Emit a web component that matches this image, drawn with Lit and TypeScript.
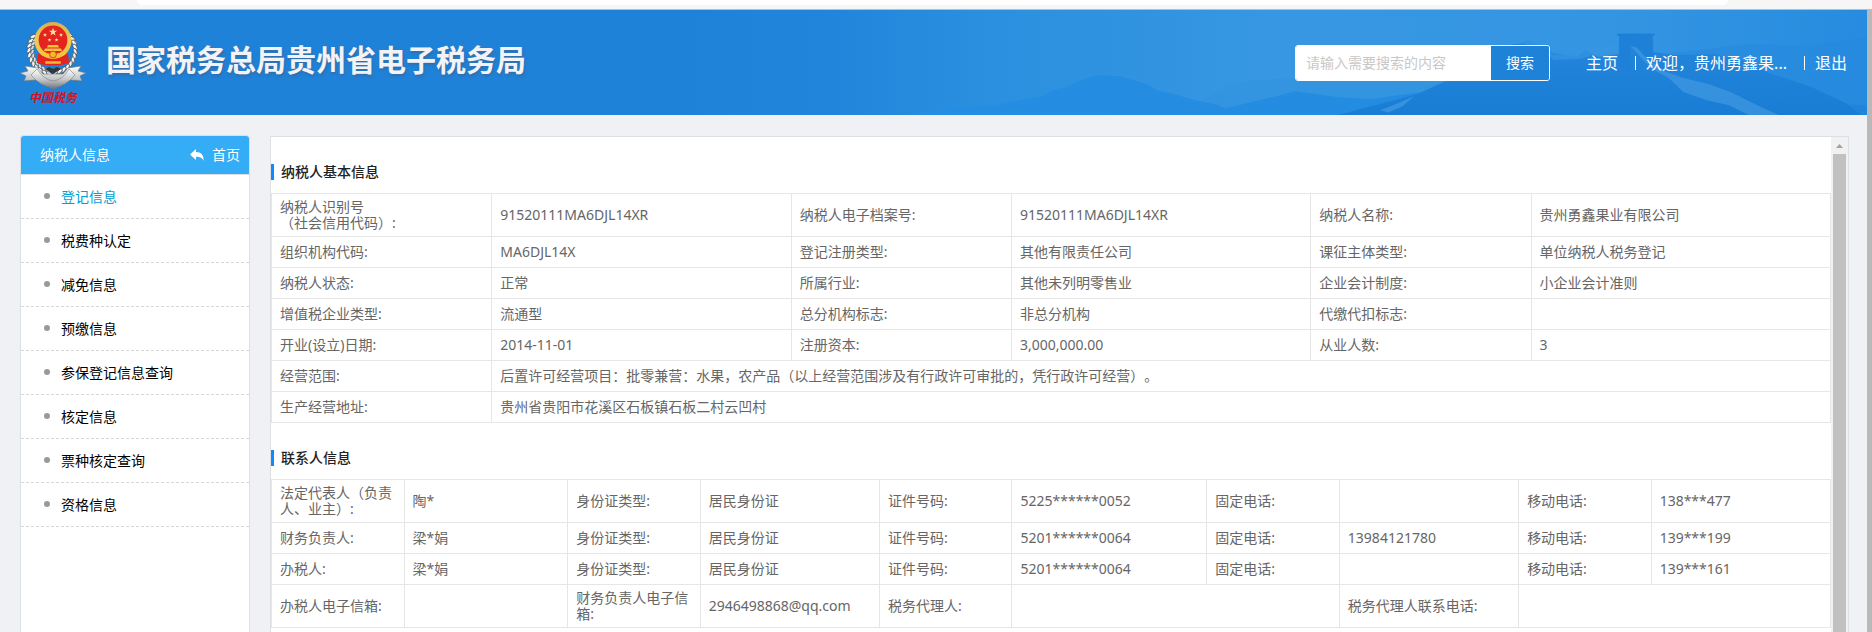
import { LitElement, html, css, svg } from "lit";
import { customElement, state } from "lit/decorators.js";
import { classMap } from "lit/directives/class-map.js";

type Cell = { text: string; span?: number };
const c = (text: string, span?: number): Cell => ({ text, span });

const MENU = [
  "登记信息",
  "税费种认定",
  "减免信息",
  "预缴信息",
  "参保登记信息查询",
  "核定信息",
  "票种核定查询",
  "资格信息",
];

const BASIC: Cell[][] = [
  [c("纳税人识别号\n（社会信用代码）:"), c("91520111MA6DJL14XR"), c("纳税人电子档案号:"), c("91520111MA6DJL14XR"), c("纳税人名称:"), c("贵州勇鑫果业有限公司")],
  [c("组织机构代码:"), c("MA6DJL14X"), c("登记注册类型:"), c("其他有限责任公司"), c("课征主体类型:"), c("单位纳税人税务登记")],
  [c("纳税人状态:"), c("正常"), c("所属行业:"), c("其他未列明零售业"), c("企业会计制度:"), c("小企业会计准则")],
  [c("增值税企业类型:"), c("流通型"), c("总分机构标志:"), c("非总分机构"), c("代缴代扣标志:"), c("")],
  [c("开业(设立)日期:"), c("2014-11-01"), c("注册资本:"), c("3,000,000.00"), c("从业人数:"), c("3")],
  [c("经营范围:"), c("后置许可经营项目：批零兼营：水果，农产品（以上经营范围涉及有行政许可审批的，凭行政许可经营）。", 5)],
  [c("生产经营地址:"), c("贵州省贵阳市花溪区石板镇石板二村云凹村", 5)],
];

const CONTACTS: Cell[][] = [
  [c("法定代表人（负责人、业主）:"), c("陶*"), c("身份证类型:"), c("居民身份证"), c("证件号码:"), c("5225******0052"), c("固定电话:"), c(""), c("移动电话:"), c("138***477")],
  [c("财务负责人:"), c("梁*娟"), c("身份证类型:"), c("居民身份证"), c("证件号码:"), c("5201******0064"), c("固定电话:"), c("13984121780"), c("移动电话:"), c("139***199")],
  [c("办税人:"), c("梁*娟"), c("身份证类型:"), c("居民身份证"), c("证件号码:"), c("5201******0064"), c("固定电话:"), c(""), c("移动电话:"), c("139***161")],
  [c("办税人电子信箱:"), c(""), c("财务负责人电子信箱:"), c("2946498868@qq.com"), c("税务代理人:"), c("", 2), c("税务代理人联系电话:"), c("", 2)],
];

@customElement("tax-emblem")
export class TaxEmblem extends LitElement {
  static styles = css`
    :host { display: block; width: 66px; height: 86px; }
    svg { display: block; }
    .script { font: italic 700 12px "Noto Sans CJK SC", sans-serif; fill: #d3141d; }
  `;

  private wheat(side: number) {
    const grains = Array.from({ length: 11 }, (_, i) => {
      const a = ((-38 + i * 11.5) * Math.PI) / 180;
      const x = 33 + side * 23 * Math.cos(a);
      const y = 28 + 23 * Math.sin(a);
      const r = side * (i * 11.5 - 38 + 62);
      return svg`<g transform="translate(${x} ${y}) rotate(${r})">
        <ellipse cx="-1.8" rx="3.2" ry="1.7" fill="#f4f4f4" stroke="#454b50" stroke-width=".7"/>
        <ellipse cx="2" cy="1.6" rx="2.8" ry="1.4" fill="#d9dcde" stroke="#50565a" stroke-width=".6"/>
      </g>`;
    });
    return svg`<g>${grains}</g>`;
  }

  render() {
    const star = "M0-5 1.2-1.6 4.8-1.6 1.9.6 3 4.1 0 2-3 4.1-1.9.6-4.8-1.6-1.2-1.6Z";
    return html`<svg width="66" height="86" viewBox="0 -2 66 86" role="img" aria-label="中国税务">
      <defs>
        <linearGradient id="silver" x1="0" y1="0" x2="0" y2="1">
          <stop offset="0" stop-color="#ffffff"/><stop offset=".55" stop-color="#c5c7c8"/><stop offset="1" stop-color="#777c80"/>
        </linearGradient>
        <linearGradient id="gold" x1="0" y1="0" x2="0" y2="1">
          <stop offset="0" stop-color="#dcb04c"/><stop offset=".5" stop-color="#efc95a"/><stop offset="1" stop-color="#f5bf2c"/>
        </linearGradient>
      </defs>
      ${this.wheat(-1)}${this.wheat(1)}
      <path d="M18 32H48L49 41Q33 46 17 41Z" fill="#e5231f"/>
      <circle cx="33" cy="18.500" r="18.500" fill="url(#gold)"/>
      <circle cx="33" cy="18" r="14.400" fill="#e5231f"/>
      <g fill="#fbe7a2">
        <path d=${star} transform="translate(33 10) scale(.85)"/>
        <path d=${star} transform="translate(25 13) scale(.42)"/>
        <path d=${star} transform="translate(41 13) scale(.42)"/>
        <path d=${star} transform="translate(29.5 18) scale(.42)"/>
        <path d=${star} transform="translate(36.5 18) scale(.42)"/>
      </g>
      <path d="M28 23H38L39 25.500H27ZM25 26.500H41L42 29H24Z" fill="#f5c53a"/>
      <path d="M19 28Q33 36 47 28L45 33Q33 38 21 33Z" fill="#f5c53a"/>
      <circle cx="33" cy="32.500" r="3.400" fill="#f0b92f" stroke="#e5231f" stroke-width=".8"/>
      <path d="M25 39H41V42H25Z" fill="#f0b92f" stroke="#e5231f" stroke-width=".5"/>
      <path d="M0 51 8 49 5 44 18 46 23 52 43 52 48 46 61 44 58 49 66 51 60 54 62 59 50 58 44 62 34 67 22 62 16 58 4 59 6 54Z" fill="url(#silver)" stroke="#6c7378" stroke-width=".6"/>
      <path d="M17 47Q24 58 33 59Q43 58 49 47L55 53Q46 64 33 66Q20 64 11 53Z" fill="url(#silver)" stroke="#7b8185" stroke-width=".6"/>
      <path d="M25 47 33 52 41 47 37 45 33 47 29 45Z" fill="#31383d"/>
      <text class="script" x="9" y="80">中国税务</text>
    </svg>`;
  }
}

@customElement("header-scenery")
export class HeaderScenery extends LitElement {
  static styles = css`
    :host { display: block; }
    svg { display: block; width: 100%; height: 100%; }
  `;
  render() {
    return html`<svg viewBox="0 0 1167 105" preserveAspectRatio="xMaxYMid slice" aria-hidden="true">
      <defs>
        <linearGradient id="sky" x1="0" y1="0" x2="1" y2="0">
          <stop offset="0" stop-color="#1f82d9"/><stop offset=".12" stop-color="#2186db"/>
          <stop offset=".26" stop-color="#2b90df"/><stop offset=".5" stop-color="#3797e2"/>
          <stop offset=".78" stop-color="#3495e2"/><stop offset="1" stop-color="#278cdf"/>
        </linearGradient>
        <linearGradient id="hill" x1="0" y1="0" x2="1" y2="0">
          <stop offset="0" stop-color="#258ee2"/><stop offset=".55" stop-color="#238be0"/><stop offset="1" stop-color="#1f84db"/>
        </linearGradient>
        <linearGradient id="ridge" x1="0" y1="0" x2="0" y2="1">
          <stop offset="0" stop-color="#2487dc"/><stop offset="1" stop-color="#1a7dd5"/>
        </linearGradient>
      </defs>
      <rect width="1167" height="105" fill="url(#sky)"/>
      <path d="M500 96 530 76 560 70 600 68 660 62 720 50 790 38 860 42 930 60V105H500Z" fill="#3292e0" opacity=".6"/>
      <path d="M955 45 1000 40 1050 34 1100 36 1167 28V105H955Z" fill="#2387dd" opacity=".45"/>
      <path d="M225 103 250 98 295 96 320 91 350 85 358 80 372 77 384 71 402 65 425 66 440 70 455 75 462 80 480 84 500 90 520 94 530 98 560 91 600 81 643 87 674 89 716 83 760 78 1167 95V105H225Z" fill="url(#hill)"/>
      <path d="M640 105 690 92 720 84 760 66 790 48 808 36 830 31 845 36 856 44 880 46 888 40 900 47 921 44 921 24 954 24 955 42 975 45 1015 44 1045 51 1070 63 1110 76 1146 93 1162 105Z" fill="url(#ridge)"/>
      <path d="M808 35Q825 26 842 34L856 45 880 43 898 37 919 35V42L898 44 882 49 856 50 842 39 826 34Z" fill="#3997e2" opacity=".65"/>
      <path d="M932 36 940 38 952 51 968 62 985 68 1010 74 1032 82 1062 97 1080 105H1050L1030 95 1008 90 985 82 970 68 952 58Z" fill="#4a9fe4" opacity=".55"/>
      <path d="M684 100 704 92 717 86 706 96 692 102Z" fill="#48a0e6" opacity=".6"/>
      <path d="M919 25H956M921 30H954" stroke="#1c7cd1" stroke-width="2" stroke-dasharray="4 1"/>
      <path d="M921 25H954V50L946 46 938 37 932 36V62L921 56Z" fill="#1f80d7"/>
    </svg>`;
  }
}

@customElement("app-root")
export class AppRoot extends LitElement {
  @state() private active = 0;

  static styles = css`
    :host {
      display: flex;
      flex-direction: column;
      height: 100vh;
      overflow: hidden;
      background: #f0f1f4;
      font-family: "Noto Sans", "Noto Sans CJK SC", sans-serif;
      font-size: 14px;
      line-height: 16px;
      color: #666;
      text-spacing-trim: space-all;
    }
    * { box-sizing: border-box; }
    a { color: inherit; text-decoration: none; }

    .browser-edge {
      flex: none;
      display: flex;
      height: 10px;
      padding: 0 144px 0 137px;
      background: #f6f6f6;
      border-bottom: 1px solid #b9bcc0;
    }
    .omnibox { flex: 1; height: 5px; background: #fff; border-radius: 0 0 14px 14px; }

    .viewport { flex: 1; display: flex; min-height: 0; }
    .page { flex: 1; min-width: 0; display: flex; flex-direction: column; }
    .window-scroll { flex: none; width: 5px; background: #b9b9b9; }

    .header {
      position: relative;
      flex: none;
      display: flex;
      align-items: center;
      height: 105px;
      padding: 0 20px;
      background: #1f82d9;
      color: #fff;
    }
    .scenery { position: absolute; top: 0; right: 0; bottom: 0; width: 63%; }
    .brand { position: relative; flex: 1; display: flex; align-items: center; gap: 20px; }
    .title {
      margin: 0;
      padding-bottom: 5px;
      font-size: 30px;
      line-height: 40px;
      font-weight: 700;
      color: #f2f2f7;
      text-shadow: 1px 2px 3px rgba(70, 90, 120, 0.55);
      white-space: nowrap;
    }
    .search {
      position: relative;
      display: flex;
      width: 255px;
      height: 36px;
      border: 1px solid #fff;
      border-radius: 3px;
      overflow: hidden;
    }
    .search input {
      flex: 1;
      min-width: 0;
      padding: 0 10px;
      border: 0;
      outline: 0;
      background: #fff;
      font: inherit;
      color: #333;
    }
    .search input::placeholder { color: #c8c8c8; opacity: 1; }
    .search button {
      width: 58px;
      padding: 0;
      border: 0;
      background: #1f82d9;
      font: inherit;
      color: #fff;
    }
    .links {
      position: relative;
      display: flex;
      align-items: center;
      gap: 10px;
      margin-left: 36px;
      font-size: 16px;
      line-height: 24px;
      white-space: nowrap;
    }
    .links .bar { width: 1px; height: 14px; margin-left: 7px; background: #fff; }

    .body { flex: 1; display: flex; gap: 20px; min-height: 0; padding: 20px 18px 0 20px; }

    .side {
      flex: none;
      width: 230px;
      border: 1px solid #dcdfe3;
      border-bottom: 0;
      border-radius: 4px 4px 0 0;
      background: #fff;
      overflow: hidden;
    }
    .side-head {
      display: flex;
      align-items: center;
      justify-content: space-between;
      height: 39px;
      padding: 0 9px 0 19px;
      background: #35acf6;
      border-bottom: 1px solid #dcdfe3;
      color: #fff;
    }
    .side-head a { display: flex; align-items: center; gap: 8px; }
    .menu { margin: 0; padding: 0; list-style: none; }
    .menu a {
      display: flex;
      align-items: center;
      gap: 11px;
      height: 44px;
      padding-left: 23px;
      border-bottom: 1px dashed #d8d8d8;
      color: #000;
    }
    .menu a::before {
      content: "";
      width: 6px;
      height: 6px;
      margin-bottom: 2px;
      border-radius: 50%;
      background: #999;
    }
    .menu a.active { color: #00a0d2; }

    .main {
      flex: 1;
      min-width: 0;
      display: flex;
      margin-top: 1px;
      border: 1px solid #dcdfe3;
      border-bottom: 0;
      background: #fff;
    }
    .content { flex: 1; min-width: 0; overflow: hidden; }
    h2 {
      margin: 27px 0 13px;
      padding-left: 7px;
      border-left: 3px solid #0d8bff;
      font-size: 14px;
      line-height: 16px;
      font-weight: 500;
      color: #222;
    }
    table { width: 100%; border-collapse: collapse; table-layout: fixed; }
    td {
      height: 31px;
      padding: 5px 8px;
      border: 1px solid #e6e6e6;
      vertical-align: middle;
      white-space: pre-line;
    }
    .w-a { width: 14.13%; }
    .w-b { width: 19.2%; }
    .w-c { width: 8.5%; }
    .w-d { width: 10.5%; }
    .w-e { width: 11.5%; }
    .w-f { width: 12.5%; }

    .scroll {
      flex: none;
      display: flex;
      flex-direction: column;
      align-items: center;
      width: 17px;
      background: #f1f1f1;
    }
    .scroll svg { flex: none; display: block; }
    .thumb { flex: 1; width: 13px; background: #c1c1c1; }
  `;

  private table(label: string, widths: string[], rows: Cell[][]) {
    return html`<table aria-label=${label}>
      <colgroup>${widths.map((w) => html`<col class="w-${w}">`)}</colgroup>
      <tbody>
        ${rows.map((r) => html`<tr>${r.map((x) => html`<td colspan=${x.span ?? 1}>${x.text}</td>`)}</tr>`)}
      </tbody>
    </table>`;
  }

  private pick(e: Event, i: number) {
    e.preventDefault();
    this.active = i;
  }

  render() {
    return html`
      <div class="browser-edge"><div class="omnibox"></div></div>
      <div class="viewport" lang="zh-CN">
        <div class="page">
          <header class="header">
            <header-scenery class="scenery"></header-scenery>
            <div class="brand">
              <tax-emblem></tax-emblem>
              <h1 class="title">国家税务总局贵州省电子税务局</h1>
            </div>
            <form class="search" @submit=${(e: Event) => e.preventDefault()}>
              <input type="text" aria-label="搜索内容" placeholder="请输入需要搜索的内容">
              <button type="submit">搜索</button>
            </form>
            <nav class="links">
              <a href="#">主页</a><span class="bar"></span>
              <a href="#">欢迎，贵州勇鑫果...</a><span class="bar"></span>
              <a href="#">退出</a>
            </nav>
          </header>
          <div class="body">
            <aside class="side">
              <div class="side-head">
                <span>纳税人信息</span>
                <a href="#">
                  <svg width="14" height="12" viewBox="0 0 14 12" aria-hidden="true">
                    <path d="M6 0V3C11 3 14 6 13.6 12C12.4 8.800 10 7.800 6 7.800V11L0 5.500Z" fill="#fff"/>
                  </svg>首页</a>
              </div>
              <ul class="menu">
                ${MENU.map((m, i) => html`<li>
                  <a href="#" class=${classMap({ active: i === this.active })} @click=${(e: Event) => this.pick(e, i)}>${m}</a>
                </li>`)}
              </ul>
            </aside>
            <main class="main">
              <div class="content">
                <h2>纳税人基本信息</h2>
                ${this.table("纳税人基本信息", ["a", "b", "a", "b", "a", "b"], BASIC)}
                <h2>联系人信息</h2>
                ${this.table("联系人信息", ["c", "d", "c", "e", "c", "f", "c", "e", "c", "e"], CONTACTS)}
              </div>
              <div class="scroll">
                <svg width="17" height="17" viewBox="0 0 17 17" aria-hidden="true"><path d="M5 11 8.500 7 12 11Z" fill="#a3a3a3"/></svg>
                <div class="thumb"></div>
              </div>
            </main>
          </div>
        </div>
        <div class="window-scroll"></div>
      </div>
    `;
  }
}
